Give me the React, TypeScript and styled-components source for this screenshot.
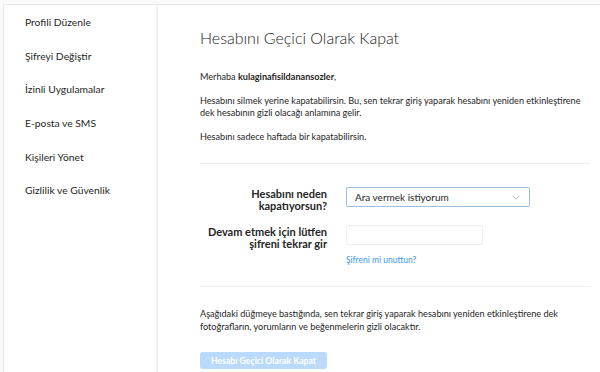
import styled, { createGlobalStyle } from "styled-components";

const GlobalStyle = createGlobalStyle`
  html, body {
    margin: 0;
    padding: 0;
    background: #fafafa;
  }
  body {
    font-family: Lato, "Open Sans", sans-serif;
    color: #262626;
  }
`;

const Page = styled.div`
  padding: 4px 0 0 3px;
  height: 372px;
  box-sizing: border-box;
  overflow: hidden;
`;

const Panel = styled.div`
  display: flex;
  background: #fff;
  border-top: 1px solid #e8e8e8;
  border-left: 1px solid #e8e8e8;
  height: 100%;
`;

const Sidebar = styled.ul`
  list-style: none;
  margin: 0;
  padding: 0;
  width: 152px;
  border-right: 2px solid #efefef;
`;

const NavItem = styled.li`
  height: 33.7px;
  display: flex;
  align-items: center;
  padding-left: 21px;
  font-size: 10.3px;
  color: #1f1f1f;
`;

const Main = styled.div`
  flex: 1;
  padding: 22px 10px 0 42px;
`;

const Title = styled.h1`
  margin: 0;
  font-size: 16px;
  line-height: 22px;
  font-weight: 300;
  color: #1a1a1a;
`;

const Text = styled.p<{ $gap?: number }>`
  margin: ${(p) => p.$gap ?? 11}px 0 0 0;
  font-size: 9.1px;
  line-height: 12.5px;
  color: #262626;
  white-space: nowrap;
`;

const Divider = styled.hr<{ $gap: number }>`
  margin: ${(p) => p.$gap}px 0 0 0;
  border: none;
  border-top: 1px solid #efefef;
`;

const Form = styled.div`
  display: grid;
  grid-template-columns: 127px 1fr;
  column-gap: 19px;
  row-gap: 14px;
  margin-top: 23px;
  align-items: start;
`;

const Label = styled.label`
  text-align: right;
  font-size: 11px;
  line-height: 11.5px;
  font-weight: 700;
  color: #262626;
  padding-top: 1px;
`;

const Select = styled.div`
  box-sizing: border-box;
  width: 184px;
  height: 20px;
  border: 1px solid #9dbde3;
  border-radius: 2px;
  display: flex;
  align-items: center;
  justify-content: space-between;
  padding: 0 9px 0 8px;
  font-size: 10px;
  color: #262626;
`;

const Input = styled.div`
  box-sizing: border-box;
  width: 137px;
  height: 20px;
  border: 1px solid #efefef;
  border-radius: 2px;
  background: #fff;
`;

const Field = styled.div``;

const Link = styled.a`
  display: block;
  margin-top: 9px;
  font-size: 8.5px;
  line-height: 12px;
  color: #3897f0;
  text-decoration: none;
`;

const Button = styled.button`
  display: block;
  margin-top: 19px;
  width: 127px;
  height: 17px;
  border: none;
  border-radius: 3px;
  background: #b9dafb;
  color: #fff;
  font-family: inherit;
  font-size: 8.7px;
  font-weight: 700;
  padding: 0;
`;

function Chevron() {
  return (
    <svg width="8" height="5" viewBox="0 0 8 5">
      <path d="M0.5 0.7 L4 4.2 L7.5 0.7" fill="none" stroke="#b4b4b4" strokeWidth="0.9" />
    </svg>
  );
}

const navItems = [
  "Profili Düzenle",
  "Şifreyi Değiştir",
  "İzinli Uygulamalar",
  "E-posta ve SMS",
  "Kişileri Yönet",
  "Gizlilik ve Güvenlik",
];

export default function App() {
  return (
    <>
      <GlobalStyle />
      <Page>
        <Panel>
          <Sidebar>
            {navItems.map((item) => (
              <NavItem key={item}>{item}</NavItem>
            ))}
          </Sidebar>
          <Main>
            <Title>Hesabını Geçici Olarak Kapat</Title>
            <Text $gap={22}>
              Merhaba <b>kulaginafisildanansozler</b>,
            </Text>
            <Text>
              Hesabını silmek yerine kapatabilirsin. Bu, sen tekrar giriş yaparak hesabını yeniden etkinleştirene
              <br />
              dek hesabının gizli olacağı anlamına gelir.
            </Text>
            <Text>Hesabını sadece haftada bir kapatabilirsin.</Text>
            <Divider $gap={20} />
            <Form>
              <Label>
                Hesabını neden
                <br />
                kapatıyorsun?
              </Label>
              <Select>
                <span>Ara vermek istiyorum</span>
                <Chevron />
              </Select>
              <Label>
                Devam etmek için lütfen
                <br />
                şifreni tekrar gir
              </Label>
              <Field>
                <Input />
                <Link href="#">Şifreni mi unuttun?</Link>
              </Field>
            </Form>
            <Divider $gap={20} />
            <Text $gap={21}>
              Aşağıdaki düğmeye bastığında, sen tekrar giriş yaparak hesabını yeniden etkinleştirene dek
              <br />
              fotoğrafların, yorumların ve beğenmelerin gizli olacaktır.
            </Text>
            <Button>Hesabı Geçici Olarak Kapat</Button>
          </Main>
        </Panel>
      </Page>
    </>
  );
}
